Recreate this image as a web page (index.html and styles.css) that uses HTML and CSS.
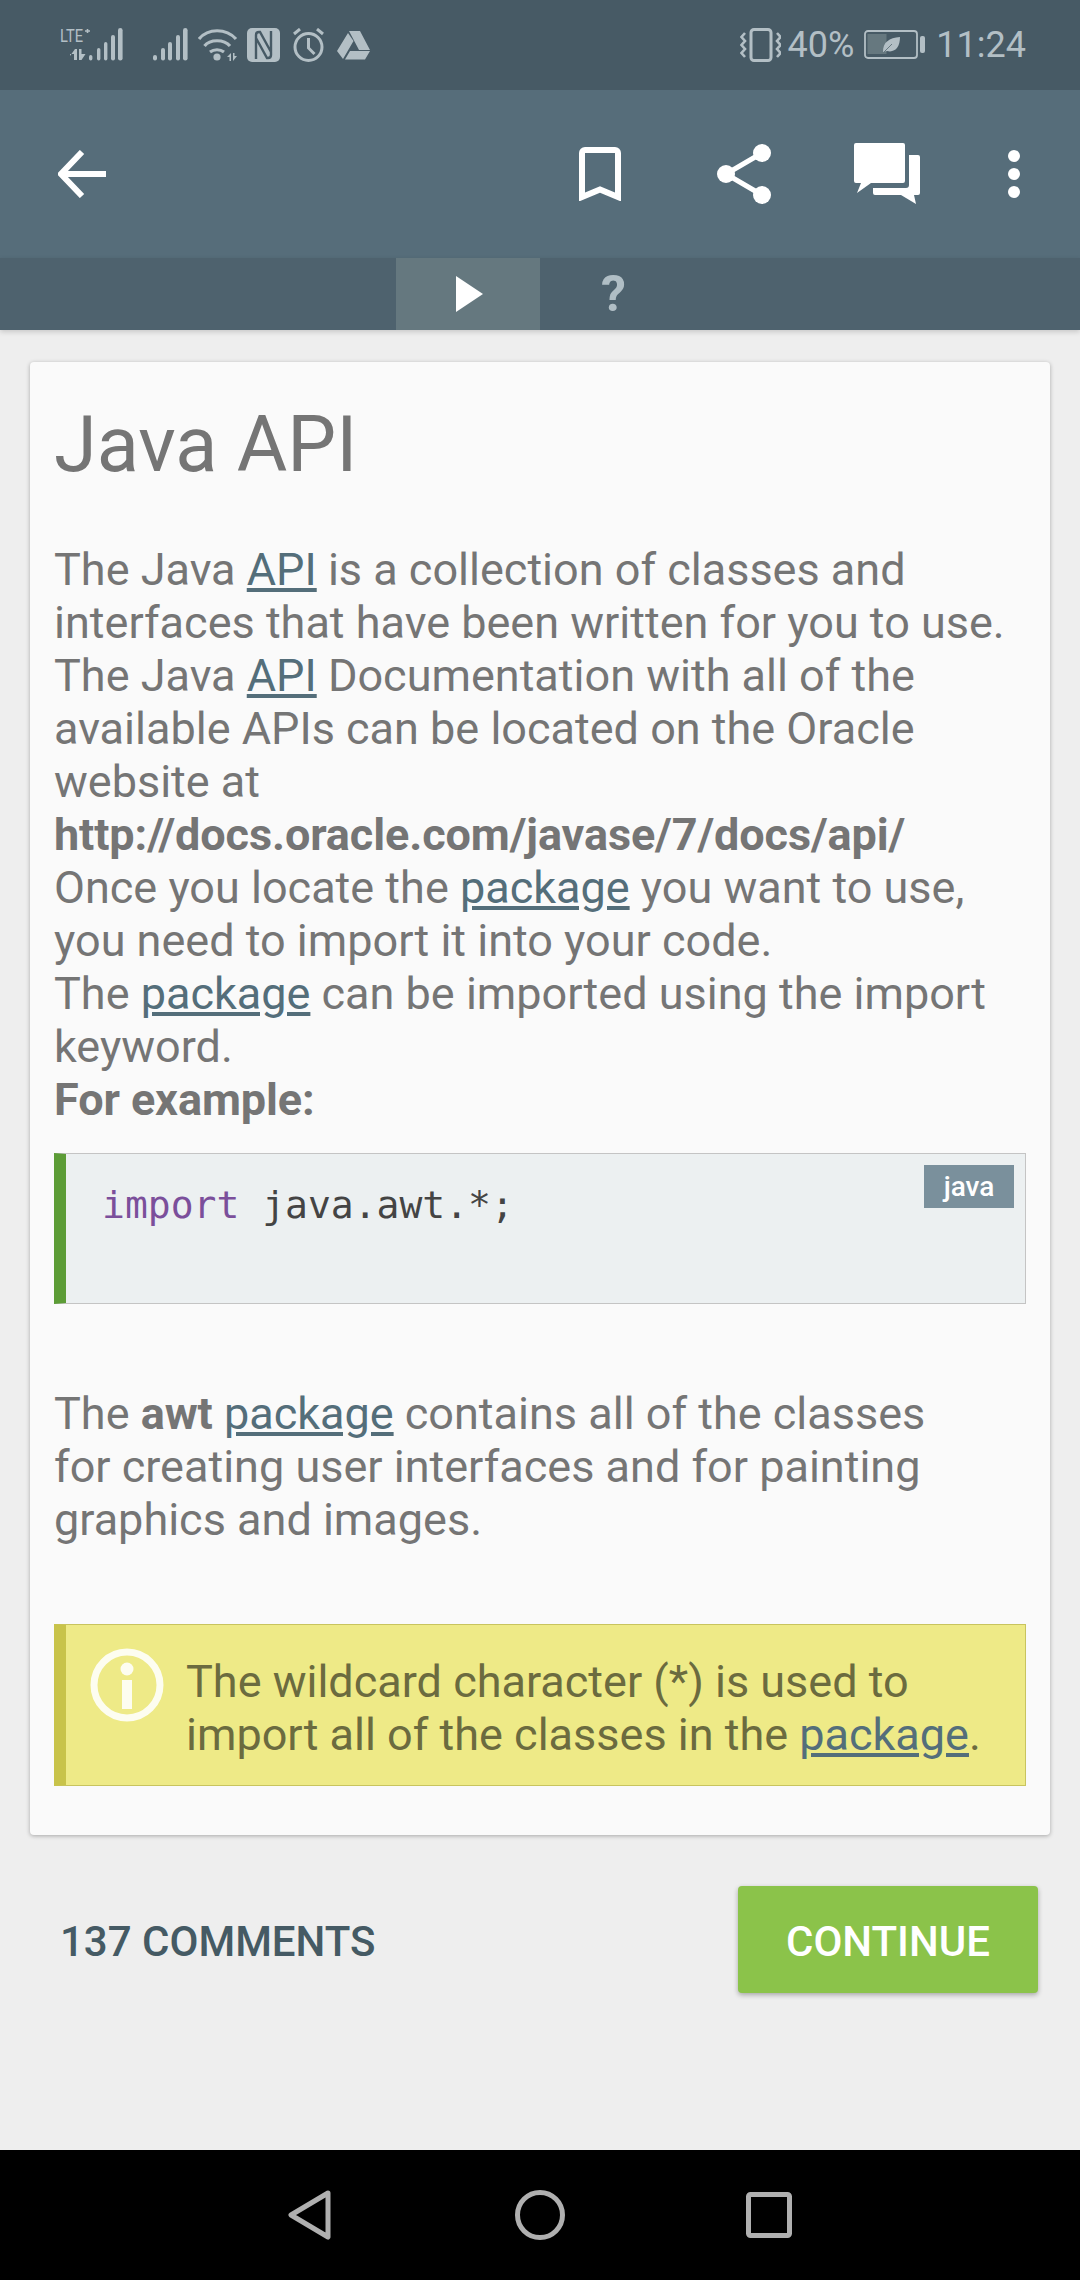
FILE: index.html
```html
<!DOCTYPE html>
<html lang="en">
<head>
<meta charset="utf-8">
<title>Java API</title>
<link rel="stylesheet" href="styles.css">
</head>
<body>
<div class="screen">
  <header class="status">
    <svg class="ic-lte" width="66" height="36" viewBox="0 0 66 36"><g class="sfill">
      <text x="2" y="15" class="lte" textLength="23" lengthAdjust="spacingAndGlyphs">LTE</text>
      <path d="M27 4h5M29.5 2v4" fill="none" stroke="#b3bfc5" stroke-width="1.6"/>
      <path d="M12 29l5-7h2v11h-3v-6h-4zM21 22h2.5v5l4 0-4 6h-2.5z"/>
      <rect x="31" y="28" width="3.4" height="5.5" rx="1.7"/><rect x="39" y="21" width="3.4" height="12.5" rx="1.7"/><rect x="46" y="15" width="3.4" height="18.5" rx="1.7"/><rect x="53" y="8" width="4" height="25.5" rx="2"/><rect x="60" y="1" width="4.6" height="32.5" rx="2.3"/></g></svg>
    <svg class="ic-sig" width="36" height="36" viewBox="0 0 36 36"><g class="sfill"><rect x="1" y="28" width="4" height="5.5" rx="2"/><rect x="9" y="21" width="4" height="12.5" rx="2"/><rect x="16" y="15" width="4" height="18.5" rx="2"/><rect x="24" y="8" width="4" height="25.5" rx="2"/><rect x="31" y="1" width="4.6" height="32.5" rx="2.3"/></g></svg>
    <svg class="ic-wifi" width="40" height="34" viewBox="0 0 40 34"><g fill="none" stroke="#b3bfc5" stroke-width="3.2"><path d="M1 11C10 0 28 0 38 11"/><path d="M6.5 18C12 11 26 11 32 18"/><path d="M12 24c4-3 10-3 14 0"/></g><circle cx="19" cy="29" r="3.6" fill="#b3bfc5"/><path class="sfillp" d="M29 29l4-4v8h-1.5v-4zM35 25h1.5v3l2.500 0-4 5z"/></svg>
    <svg class="ic-nfc" width="33" height="34" viewBox="0 0 33 34"><rect width="33" height="34" rx="5" fill="#b3bfc5"/><path d="M9 31V7q0-3 3-3h1l11 20M24 3v24q0 3-3 3h-1L9 10" fill="none" stroke="#475a65" stroke-width="2.4"/></svg>
    <svg class="ic-alarm" width="34" height="34" viewBox="0 0 34 34"><g fill="none" stroke="#b3bfc5" stroke-width="3"><circle cx="16.500" cy="19" r="13.500"/><path d="M16.500 10v10l6 6"/><path d="M2 6l6-5M31 6l-6-5"/></g></svg>
    <svg class="ic-drive" width="33" height="30" viewBox="0 0 33 30"><path class="sfillp" d="M12 1h11l10 19H22z M11 3L0 21l6 8 10.500-18z M8 29.500h20l5-8.500H13z"/></svg>
    <div class="status-right">
      <svg class="ic-vib" width="42" height="34" viewBox="0 0 42 34"><rect x="12" y="1.500" width="20" height="31" rx="3" fill="none" stroke="#b3bfc5" stroke-width="3"/><path d="M6 5L2.500 9 6 13l-3.500 4L6 21l-3.500 4L6 29M38 5l3.500 4-3.500 4 3.500 4-3.500 4 3.500 4-3.500 4" fill="none" stroke="#b3bfc5" stroke-width="2.600"/></svg>
      <span class="status-text pct">40%</span>
      <svg class="ic-bat" width="61" height="30" viewBox="0 0 61 30"><rect x="1" y="1" width="52" height="27" rx="3" fill="none" stroke="#b3bfc5" stroke-width="1.800"/><rect x="3.500" y="4" width="19" height="20" fill="#66787f"/><path d="M19 22c0-10 6-14 17-15 0 10-5 16-13 14z" fill="#b3bfc5"/><path d="M19 23l9-9" stroke="#66787f" stroke-width="1"/><rect x="56" y="6" width="5" height="17" rx="2" fill="#b3bfc5"/></svg>
      <span class="status-text time">11:24</span>
    </div>
  </header>

  <nav class="toolbar">
    <svg class="t-back" width="48" height="48" viewBox="0 0 48 48"><path d="M2 24h46M24 2L3 24l21 22" fill="none" stroke="#fff" stroke-width="6"/></svg>
    <svg class="t-book" width="42" height="54" viewBox="0 0 42 54"><path d="M3 50V6a3 3 0 0 1 3-3h30a3 3 0 0 1 3 3v44L21 42.500z" fill="none" stroke="#fff" stroke-width="6"/></svg>
    <svg class="t-share" width="54" height="60" viewBox="0 0 54 60"><path d="M45 9L9 30l36 21" fill="none" stroke="#fff" stroke-width="5"/><circle cx="45" cy="9" r="9" fill="#fff"/><circle cx="9" cy="30" r="9" fill="#fff"/><circle cx="45" cy="51" r="9" fill="#fff"/></svg>
    <svg class="t-chat" width="66" height="62" viewBox="0 0 66 62"><path d="M2 0h47a2 2 0 0 1 2 2v36a2 2 0 0 1-2 2H17L3 50l4-10H2a2 2 0 0 1-2-2V2a2 2 0 0 1 2-2z" fill="#fff"/><path d="M55 12h9a2 2 0 0 1 2 2v36a2 2 0 0 1-2 2h-4l2 9-15-9H21a2 2 0 0 1-2-2v-5h33a3 3 0 0 0 3-3z" fill="#fff"/></svg>
    <svg class="t-dots" width="12" height="48" viewBox="0 0 12 48"><circle cx="6" cy="6" r="6" fill="#fff"/><circle cx="6" cy="24" r="6" fill="#fff"/><circle cx="6" cy="42" r="6" fill="#fff"/></svg>
  </nav>

  <div class="tabs">
    <div class="tab tab-active"><svg class="play" width="27" height="36" viewBox="0 0 27 36"><path d="M0 0l27 18L0 36z" fill="#fff"/></svg></div>
    <div class="tab tab-q">?</div>
  </div>

  <main class="content">
    <article class="card">
      <h1 class="title">Java API</h1>
      <p class="para">The Java <a class="link">API</a> is a collection of classes and interfaces that have been written for you to use.<br>The Java <a class="link">API</a> Documentation with all of the available APIs can be located on the Oracle website at<br><b>http://docs.oracle.com/javase/7/docs/api/</b><br>Once you locate the <a class="link">package</a> you want to use, you need to import it into your code.<br>The <a class="link">package</a> can be imported using the import keyword.<br><b>For example:</b></p>
      <div class="code">
        <span class="badge">java</span>
        <code class="code-line"><span class="kw">import</span> java.awt.*;</code>
      </div>
      <p class="para para-after">The <b>awt</b> <a class="link">package</a> contains all of the classes<br>for creating user interfaces and for painting graphics and images.</p>
      <div class="note">
        <svg class="note-icon" width="74" height="74" viewBox="0 0 74 74"><circle cx="37" cy="37" r="33" fill="none" stroke="#fdfdf0" stroke-width="7"/><circle cx="37" cy="21" r="6.500" fill="#fdfdf0"/><rect x="32" y="32" width="10" height="29" fill="#fdfdf0"/></svg>
        <p class="note-text">The wildcard character (*) is used to import all of the classes in the <a class="link">package</a>.</p>
      </div>
    </article>
    <div class="actions">
      <span class="comments">137 COMMENTS</span>
      <button class="continue">CONTINUE</button>
    </div>
  </main>

  <footer class="navbar">
    <svg width="44" height="50" viewBox="0 0 44 50"><path d="M40 3L3 25l37 22z" fill="none" stroke="#b0b0b0" stroke-width="5" stroke-linejoin="round"/></svg>
    <svg width="50" height="50" viewBox="0 0 50 50"><circle cx="25" cy="25" r="22.500" fill="none" stroke="#b0b0b0" stroke-width="5"/></svg>
    <svg class="nav-square" width="46" height="46" viewBox="0 0 46 46"><rect x="2.500" y="2.500" width="41" height="41" rx="2" fill="none" stroke="#b0b0b0" stroke-width="5"/></svg>
  </footer>
</div>
</body>
</html>
```
FILE: styles.css
```css
* { box-sizing: border-box; }
html, body { margin: 0; padding: 0; }
body { font-family: Roboto, "Liberation Sans", sans-serif; background: #eee; }
.screen { width: 1080px; height: 2280px; display: flex; flex-direction: column; overflow: hidden; background: #eee; }

.status { height: 90px; flex: none; background: #475a65; display: flex; align-items: center; padding-left: 58px; padding-right: 54px; }
.sfill, .sfillp { fill: #b3bfc5; }
.lte { font: 400 18px "Roboto", sans-serif; }
.ic-sig { margin-left: 28px; }
.ic-wifi { margin-left: 10px; }
.ic-nfc { margin-left: 9px; }
.ic-alarm { margin-left: 12px; }
.ic-drive { margin-left: 11px; }
.status-right { margin-left: auto; display: flex; align-items: center; }
.status-text { font-size: 36px; font-weight: 400; color: #b3bfc5; line-height: 40px; }
.pct { margin-left: 7px; }
.ic-bat { margin-left: 10px; }
.time { margin-left: 11px; }

.toolbar { height: 168px; flex: none; background: #566d7a; display: flex; align-items: center; padding-left: 58px; }
.t-book { margin-left: 473px; }
.t-share { margin-left: 96px; }
.t-chat { margin-left: 83px; }
.t-dots { margin-left: 88px; }

.tabs { height: 72px; flex: none; background: #4e626e; display: flex; padding-left: 396px; box-shadow: 0 2px 5px rgba(0,0,0,.16); position: relative; }
.tab { width: 144px; display: flex; align-items: center; justify-content: center; }
.tab-active { background: #65787f; }
.play { margin-left: 3px; }
.tab-q { color: #b0bec5; font-size: 50px; font-weight: 700; padding-left: 3px; }

.content { flex: 1; padding: 32px 30px 0; }
.card { height: 1473px; background: #fafafa; border-radius: 4px; box-shadow: 0 1px 4px rgba(0,0,0,.3); padding: 41px 24px 0; color: #757575; }
.title { margin: 0; font-size: 77.500px; font-weight: 400; line-height: 84px; color: #757575; }
.para { margin: 56px 0 0; font-size: 45px; line-height: 53px; font-weight: 400; }
.para b { font-weight: 700; letter-spacing: -0.1px; }
.link { color: #546e7a; text-decoration: underline; }
.code { position: relative; height: 151px; margin-top: 27px; background: #ecf0f1; border: 1px solid #c4c4c4; border-left: 12px solid #5c9c36; padding: 23px 36px; }
.code-line { font: 38px/56px "DejaVu Sans Mono", monospace; color: #444; display: block; }
.kw { color: #7b4f9b; }
.badge { position: absolute; top: 11px; right: 11px; width: 90px; height: 43px; background: #7a909c; color: #fff; font-size: 28px; font-weight: 500; display: flex; align-items: center; justify-content: center; }
.para-after { margin-top: 83px; }
.note { height: 162px; margin-top: 78px; background: #eeea87; border: 1px solid #c8c45e; border-left: 12px solid #c8c34a; display: flex; padding: 23px 0 0 24px; }
.note-icon { flex: none; }
.note-text { margin: 7px 0 0 22px; font-size: 45px; line-height: 53px; color: #6b6b3f; }

.actions { display: flex; align-items: center; justify-content: space-between; padding: 51px 12px 0 30px; }
.comments { font-size: 42px; font-weight: 500; color: #455a64; margin-top: 3px; }
.continue { width: 300px; height: 107px; border: 0; border-radius: 4px; background: #8bc34a; color: #fff; font: 500 42px Roboto, sans-serif; padding: 3px 0 0; box-shadow: 0 2px 5px rgba(0,0,0,.3); }

.navbar { height: 130px; flex: none; background: #000; display: flex; align-items: center; padding-left: 288px; gap: 183px; }
.nav-square { margin-left: -2px; }
```
